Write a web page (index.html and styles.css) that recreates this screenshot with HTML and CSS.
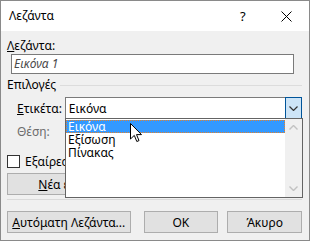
FILE: index.html
```html
<!DOCTYPE html>
<html lang="el">
<head>
    <meta charset="UTF-8">
    <title>Λεζάντα</title>
    <link rel="stylesheet" href="styles.css">
</head>
<body>
    <div class="window">
        <div class="titlebar">
            <span class="title">Λεζάντα</span>
            <span class="help">?</span>
            <span class="close">
                <svg width="11" height="11" viewBox="0 0 11 11"><path d="M0.5 0.5 L10.5 10.5 M10.5 0.5 L0.5 10.5" stroke="#000" stroke-width="1" fill="none"/></svg>
            </span>
        </div>
        <div class="content">
            <div class="label"><u>Λ</u>εζάντα:</div>
            <div class="textbox">Εικόνα 1</div>

            <div class="group">
                <span>Επιλογές</span>
                <div class="group-line"></div>
            </div>

            <div class="row select-row">
                <span class="row-label"><u>Ε</u>τικέτα:</span>
                <div class="select">
                    <span class="select-value">Εικόνα</span>
                    <span class="select-btn">
                        <svg width="9" height="5" viewBox="0 0 9 5"><path d="M0.5 0.5 L4.5 4.5 L8.5 0.5" stroke="#333" stroke-width="1.2" fill="none"/></svg>
                    </span>
                </div>
            </div>

            <div class="row pos-row">
                <span class="row-label disabled">Θέση:</span>
            </div>

            <!-- the list covers the rest of these two rows -->
            <div class="check-row">
                <span class="checkbox"></span>
                <span class="check-text">Εξαίρεση ετικέτας από τη λεζάντα</span>
            </div>

            <div class="btn-row">
                <button class="btn btn-new"><u>Ν</u>έα ετικέτα...</button>
            </div>

            <div class="separator"></div>

            <div class="footer">
                <button class="btn btn-auto"><u>Α</u>υτόματη Λεζάντα...</button>
                <button class="btn btn-ok">OK</button>
                <button class="btn btn-cancel">Άκυρο</button>
            </div>
        </div>

        <div class="dropdown">
            <div class="items">
                <div class="item selected">Εικόνα</div>
                <div class="item">Εξίσωση</div>
                <div class="item">Πίνακας</div>
            </div>
            <div class="scrollbar">
                <svg width="9" height="5" viewBox="0 0 9 5"><path d="M0.5 4.5 L4.5 0.5 L8.5 4.5" stroke="#c2c2c2" stroke-width="1.4" fill="none"/></svg>
                <svg width="9" height="5" viewBox="0 0 9 5"><path d="M0.5 0.5 L4.5 4.5 L8.5 0.5" stroke="#c2c2c2" stroke-width="1.4" fill="none"/></svg>
            </div>
        </div>

        <svg class="cursor" width="13" height="20" viewBox="0 0 13 20">
            <path d="M0.5 0.5 L0.5 16 L4.3 12.4 L6.8 18.5 L9 17.6 L6.5 11.6 L11.5 11.6 Z" fill="#fff" stroke="#000" stroke-width="1" stroke-linejoin="miter"/>
        </svg>
    </div>
</body>
</html>
```

FILE: styles.css
```css
body, html {
    margin: 0;
    padding: 0;
    font-family: "Noto Sans", sans-serif;
    font-size: 12px;
    line-height: 15px;
    color: #000;
}

.window {
    position: relative;
    width: 310px;
    height: 241px;
    box-sizing: border-box;
    border: 1px solid #8a8a8a;
    background: #f0f0f0;
    overflow: hidden;
}

.titlebar {
    height: 30px;
    background: #fff;
    display: flex;
    align-items: center;
    padding-left: 8px;
}

.title {
    flex: 1;
    margin-top: -2px;
}

.help {
    width: 12px;
    margin-right: 29px;
    font-size: 13px;
}

.close {
    display: flex;
    margin-right: 17px;
}

.content {
    padding: 7px 7px 0 6px;
}

.textbox {
    margin: 1px 0 0 4px;
    width: 283px;
    height: 20px;
    box-sizing: border-box;
    border: 1px solid #7a7a7a;
    background: #fff;
    font-style: italic;
    color: #4a4a4a;
    line-height: 18px;
    padding-left: 2px;
}

.group {
    display: flex;
    align-items: center;
    margin-top: 3px;
    gap: 4px;
}

.group-line {
    flex: 1;
    height: 1px;
    background: #dcdcdc;
    margin-top: 1px;
}

.row {
    display: flex;
    align-items: center;
    padding-left: 10px;
}

.select-row {
    margin-top: 5px;
}

.row-label {
    width: 48px;
}

.disabled {
    color: #6d6d6d;
}

.select {
    width: 238px;
    height: 22px;
    box-sizing: border-box;
    border: 1px solid #7a7a7a;
    background: #fff;
    display: flex;
    align-items: center;
}

.select-value {
    flex: 1;
    padding-left: 3px;
}

.select-btn {
    width: 17px;
    height: 22px;
    margin: -1px -1px -1px 0;
    box-sizing: border-box;
    border: 1px solid #005499;
    background: #cce4f7;
    display: flex;
    align-items: center;
    justify-content: center;
}

.pos-row {
    margin-top: 5px;
    height: 15px;
}

.check-row {
    display: flex;
    align-items: center;
    margin-top: 15px;
    gap: 5px;
    width: 58px;
    overflow: hidden;
}

.checkbox {
    flex: none;
    width: 13px;
    height: 13px;
    box-sizing: border-box;
    border: 1px solid #333;
    background: #fff;
}

.check-text {
    white-space: nowrap;
}

.btn {
    font-family: "Noto Sans", sans-serif;
    font-size: 12px;
    color: #000;
    height: 22px;
    box-sizing: border-box;
    border: 1px solid #adadad;
    background: #e1e1e1;
    padding: 0;
    margin: 0;
    white-space: nowrap;
}

.btn-row {
    margin-top: 4px;
    display: flex;
    width: 58px;
    overflow: hidden;
}

.btn-new {
    flex: none;
    width: 138px;
}

.separator {
    height: 1px;
    background: #dadada;
    margin-top: 4px;
}

.footer {
    display: flex;
    margin-top: 11px;
}

.btn-auto {
    width: 124px;
}

.btn-ok {
    width: 75px;
    margin-left: 13px;
}

.btn-cancel {
    width: 75px;
    margin-left: 9px;
}

.dropdown {
    position: absolute;
    left: 64px;
    top: 117px;
    width: 238px;
    height: 80px;
    box-sizing: border-box;
    border: 1px solid #646464;
    background: #fff;
    display: flex;
}

.items {
    flex: 1;
    padding-top: 1px;
}

.item {
    height: 13px;
    line-height: 13px;
    padding-left: 2px;
}

.item.selected {
    background: #3399ff;
    color: #fff;
    outline: 1px dotted #e3812c;
    outline-offset: -1px;
}

.scrollbar {
    width: 17px;
    background: #f0f0f0;
    display: flex;
    flex-direction: column;
    align-items: center;
    justify-content: space-between;
    padding: 6px 0 6px 0;
}

.cursor {
    position: absolute;
    left: 129px;
    top: 122px;
}
```
